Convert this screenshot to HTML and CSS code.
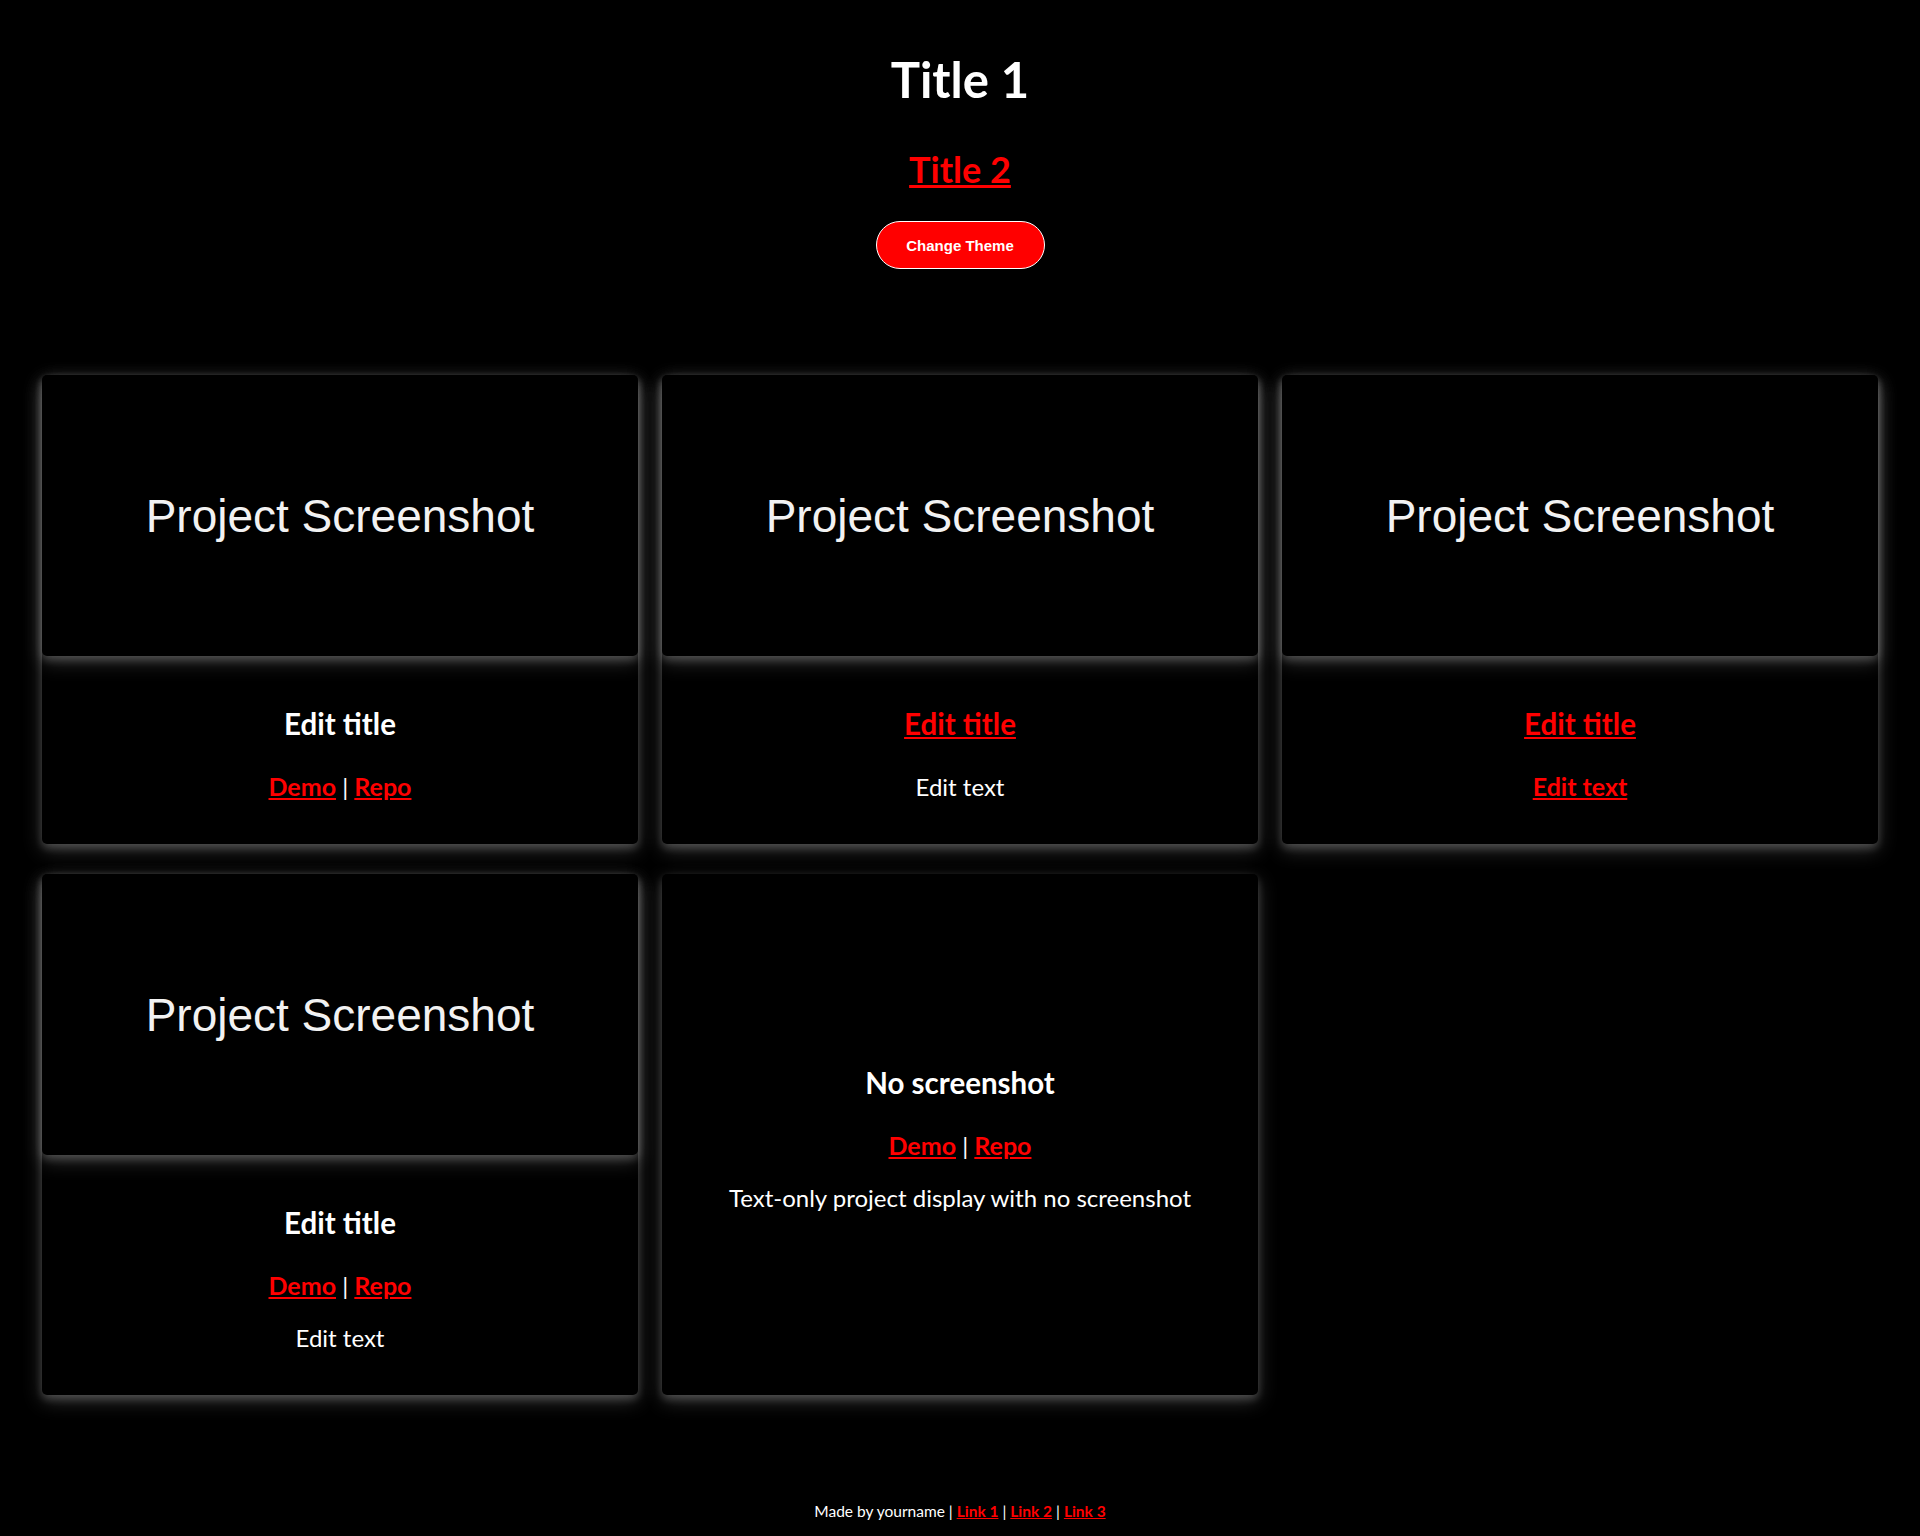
FILE: index.html
```html
<!DOCTYPE html>
<html lang="en">
<head>
<meta charset="utf-8">
<title>Portfolio</title>
<link rel="stylesheet" href="styles.css">
</head>
<body>
<header class="header">
  <h1 class="title-1">Title 1</h1>
  <h2 class="title-2"><a href="#">Title 2</a></h2>
  <button class="theme-btn" type="button">Change Theme</button>
</header>

<main class="projects">
  <article class="card">
    <div class="shot"><span>Project Screenshot</span></div>
    <div class="card-body">
      <h3 class="card-title">Edit title</h3>
      <p class="card-text"><a href="#">Demo</a> | <a href="#">Repo</a></p>
    </div>
  </article>

  <article class="card">
    <div class="shot"><span>Project Screenshot</span></div>
    <div class="card-body">
      <h3 class="card-title"><a href="#">Edit title</a></h3>
      <p class="card-text">Edit text</p>
    </div>
  </article>

  <article class="card">
    <div class="shot"><span>Project Screenshot</span></div>
    <div class="card-body">
      <h3 class="card-title"><a href="#">Edit title</a></h3>
      <p class="card-text"><a href="#">Edit text</a></p>
    </div>
  </article>

  <article class="card">
    <div class="shot"><span>Project Screenshot</span></div>
    <div class="card-body">
      <h3 class="card-title">Edit title</h3>
      <p class="card-text"><a href="#">Demo</a> | <a href="#">Repo</a></p>
      <p class="card-text">Edit text</p>
    </div>
  </article>

  <article class="card card-textonly">
    <div class="card-body">
      <h3 class="card-title">No screenshot</h3>
      <p class="card-text"><a href="#">Demo</a> | <a href="#">Repo</a></p>
      <p class="card-text">Text-only project display with no screenshot</p>
    </div>
  </article>
</main>

<footer class="footer">
  Made by yourname | <a href="#">Link 1</a> | <a href="#">Link 2</a> | <a href="#">Link 3</a>
</footer>
</body>
</html>
```

FILE: styles.css
```css
html, body {
  margin: 0;
  padding: 0;
  background: #000;
}

body {
  color: #fff;
  font-family: Lato, "Noto Sans", "Liberation Sans", sans-serif;
  min-height: 1536px;
}

a {
  color: #ff0000;
  font-weight: 700;
  text-decoration: underline;
}

.header {
  display: flex;
  flex-direction: column;
  align-items: center;
  padding-top: 49px;
}

.title-1 {
  margin: 0;
  font-size: 49px;
  line-height: 60px;
  font-weight: 700;
}

.title-2 {
  margin: 39px 0 0;
  font-size: 36px;
  line-height: 43px;
  font-weight: 700;
}

.theme-btn {
  margin-top: 30px;
  width: 169px;
  height: 48px;
  border: 1px solid #fff;
  border-radius: 24px;
  background: #ff0000;
  color: #fff;
  font-family: "Liberation Sans", Arial, sans-serif;
  font-weight: 700;
  font-size: 15px;
  cursor: pointer;
}

.projects {
  display: grid;
  grid-template-columns: repeat(3, 1fr);
  column-gap: 24px;
  row-gap: 30px;
  padding: 0 42px;
  margin-top: 106px;
}

.card {
  display: flex;
  flex-direction: column;
  border-radius: 5px;
  background: #000;
  box-shadow: 0 4px 8px 0 rgba(255, 255, 255, 0.2), 0 6px 20px 0 rgba(255, 255, 255, 0.19);
}

.shot {
  height: 281px;
  display: flex;
  align-items: center;
  justify-content: center;
  border-radius: 5px;
  background: #000;
  box-shadow: 0 4px 8px 0 rgba(255, 255, 255, 0.2), 0 6px 20px 0 rgba(255, 255, 255, 0.19);
}

.shot span {
  font-family: "Liberation Sans", Arial, sans-serif;
  font-size: 46px;
  color: #f2f2f2;
}

.card-body {
  display: flex;
  flex-direction: column;
  align-items: center;
  padding: 50px 16px 43px;
  text-align: center;
}

.card-textonly .card-body {
  flex: 1;
  justify-content: center;
}

.card-title {
  margin: 0 0 31px;
  font-size: 29.5px;
  line-height: 35px;
  font-weight: 700;
}

.card-text {
  margin: 0;
  font-size: 24px;
  line-height: 29px;
}

.card-text a {
  font-size: 25px;
}

.card-text + .card-text {
  margin-top: 23px;
}

.footer {
  margin-top: 107px;
  padding-bottom: 16px;
  text-align: center;
  font-size: 15.5px;
  line-height: 18px;
}
```
